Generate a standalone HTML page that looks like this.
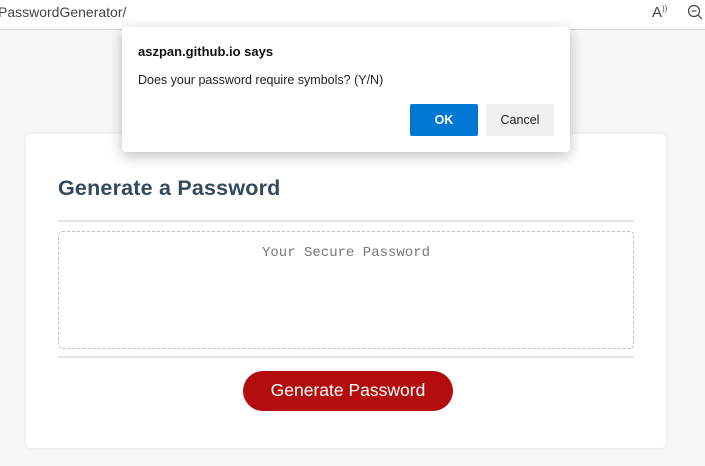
<!DOCTYPE html>
<html><head><style>
body{margin:0;width:705px;height:466px;background:#f6f7f9;font-family:"Liberation Sans",sans-serif;position:relative;overflow:hidden}
.bar{position:absolute;left:0;top:0;width:705px;height:29px;background:#fff;border-bottom:1px solid #d0d0d0}
.url{position:absolute;left:-2px;top:4px;font-size:14px;color:#444}
.card{position:absolute;left:26px;top:134px;width:640px;height:314px;background:#fff;border-radius:5px;box-shadow:0 0 4px rgba(0,0,0,.08)}
h2{position:absolute;left:32px;top:42px;margin:0;font-size:21.5px;color:#34495e;font-weight:bold;letter-spacing:0.2px}
.hr1{position:absolute;left:32px;top:86px;width:576px;height:2px;background:#e4e4e4}
.ta{position:absolute;left:32px;top:97px;width:574px;height:116px;border:1px dashed #c0c0c0;border-radius:4px}
.ta span{position:absolute;left:0;right:0;top:13px;text-align:center;font-family:"Liberation Mono",monospace;font-size:14px;color:#777}
.hr2{position:absolute;left:32px;top:222px;width:576px;height:2px;background:#e4e4e4}
.btn{position:absolute;left:217px;top:237px;width:210px;height:40px;border-radius:20px;background:#b30d0d;color:#fff;font-size:17.5px;text-align:center;line-height:38px}
.dlg{position:absolute;left:122px;top:27px;width:448px;height:125px;background:#fff;border-radius:4px;box-shadow:0 4px 14px rgba(0,0,0,.25)}
.t{position:absolute;left:16px;top:17px;font-size:13px;font-weight:bold;color:#111}
.m{position:absolute;left:16px;top:46px;font-size:12.5px;color:#222}
.ok{position:absolute;left:288px;top:77px;width:68px;height:32px;background:#0078d4;color:#fff;font-size:12.5px;font-weight:bold;text-align:center;line-height:32px;border-radius:2px}
.cn{position:absolute;left:364px;top:77px;width:68px;height:32px;background:#efefef;color:#222;font-size:12.5px;text-align:center;line-height:32px;border-radius:2px}
</style></head><body>
<div class="bar"><div class="url">PasswordGenerator/</div>
<div style="position:absolute;left:652px;top:4px;font-size:15px;color:#444">A<sup style="font-size:8px">))</sup></div>
<svg style="position:absolute;left:687px;top:4px" width="16" height="16"><circle cx="7" cy="7" r="5.5" fill="none" stroke="#444" stroke-width="1.2"/><line x1="4.5" y1="7" x2="9.5" y2="7" stroke="#444" stroke-width="1.2"/><line x1="11" y1="11" x2="15" y2="15" stroke="#444" stroke-width="1.2"/></svg></div>
<div class="card"><h2>Generate a Password</h2><div class="hr1"></div>
<div class="ta"><span>Your Secure Password</span></div><div class="hr2"></div>
<div class="btn">Generate Password</div></div>
<div class="dlg"><div class="t">aszpan.github.io says</div><div class="m">Does your password require symbols? (Y/N)</div>
<div class="ok">OK</div><div class="cn">Cancel</div></div>
</body></html>
